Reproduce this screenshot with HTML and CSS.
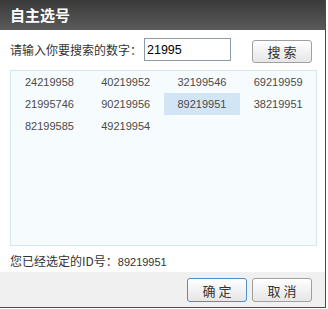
FILE: index.html
```html
<!DOCTYPE html>
<html lang="zh">
<head>
<meta charset="utf-8">
<title>自主选号</title>
<link rel="stylesheet" href="styles.css">
</head>
<body>
<div class="dialog">
  <div class="title">自主选号</div>
  <div class="content">
    <div class="search-row">
      <label class="label">请输入你要搜索的数字：</label>
      <input class="input" type="text" value="21995">
      <button class="btn search-btn">搜 索</button>
    </div>
    <div class="results">
      <div class="cell">24219958</div>
      <div class="cell">40219952</div>
      <div class="cell">32199546</div>
      <div class="cell">69219959</div>
      <div class="cell">21995746</div>
      <div class="cell">90219956</div>
      <div class="cell selected">89219951</div>
      <div class="cell">38219951</div>
      <div class="cell">82199585</div>
      <div class="cell">49219954</div>
    </div>
    <div class="status">您已经选定的ID号：<span class="num">89219951</span></div>
  </div>
  <div class="footer">
    <button class="btn ok">确 定</button>
    <button class="btn">取 消</button>
  </div>
</div>
</body>
</html>
```
FILE: styles.css
```css
html, body {
  margin: 0;
  padding: 0;
  background: #ffffff;
}
body {
  font-family: "Noto Sans CJK SC", "Liberation Sans", sans-serif;
  color: #333;
}
.dialog {
  width: 325px;
  height: 307px;
  border-right: 1px solid #4a4a4a;
  border-bottom: 1px solid #4a4a4a;
  background: #fff;
  display: flex;
  flex-direction: column;
}
.title {
  height: 30px;
  line-height: 30px;
  padding-left: 10px;
  color: #fff;
  font-size: 15px;
  font-weight: bold;
  background: linear-gradient(to bottom, #3a3a3a, #5a5a5a);
}
.content {
  flex: 1;
  padding: 8px 8px 0 10px;
}
.search-row {
  display: flex;
  align-items: flex-start;
  height: 25px;
}
.label {
  font-size: 12px;
  line-height: 23px;
  color: #333;
}
.input {
  box-sizing: border-box;
  width: 87px;
  height: 23px;
  margin: 0 0 0 2px;
  padding: 0 2px;
  border: 1px solid #8a9ba6;
  font-family: "Liberation Sans", Arial, sans-serif;
  font-size: 12.5px;
  color: #000;
  outline: none;
}
.btn {
  box-sizing: border-box;
  width: 60px;
  height: 24px;
  padding: 0;
  border: 1px solid #a0a0a0;
  border-radius: 3px;
  background: linear-gradient(to bottom, #ffffff, #e6e6e6);
  font-family: "Noto Sans CJK SC", sans-serif;
  font-size: 13px;
  color: #333;
}
.search-btn {
  height: 23px;
  margin: 2px 5px 0 auto;
}
.results {
  box-sizing: border-box;
  margin-top: 7px;
  width: 307px;
  height: 176px;
  border: 1px solid #d6e6ef;
  background: #f6fbfe;
  display: grid;
  grid-template-columns: repeat(4, 1fr);
  grid-auto-rows: 22px;
  align-content: start;
}
.cell {
  padding-left: 14px;
  line-height: 22px;
  font-family: "Liberation Sans", Arial, sans-serif;
  font-size: 11px;
  color: #4a4a4a;
}
.cell.selected {
  background: #d2e5f5;
}
.status {
  margin-top: 7px;
  font-size: 12px;
  line-height: 16px;
  color: #333;
}
.num {
  font-family: "Liberation Sans", Arial, sans-serif;
  font-size: 11px;
  color: #333;
}
.footer {
  height: 35px;
  box-sizing: border-box;
  background: #f0f0f0;
  display: flex;
  justify-content: flex-end;
  align-items: flex-start;
  gap: 5px;
  padding: 6px 13px 0 0;
}
.ok {
  border: 1px solid #4f8fcc;
}
```
